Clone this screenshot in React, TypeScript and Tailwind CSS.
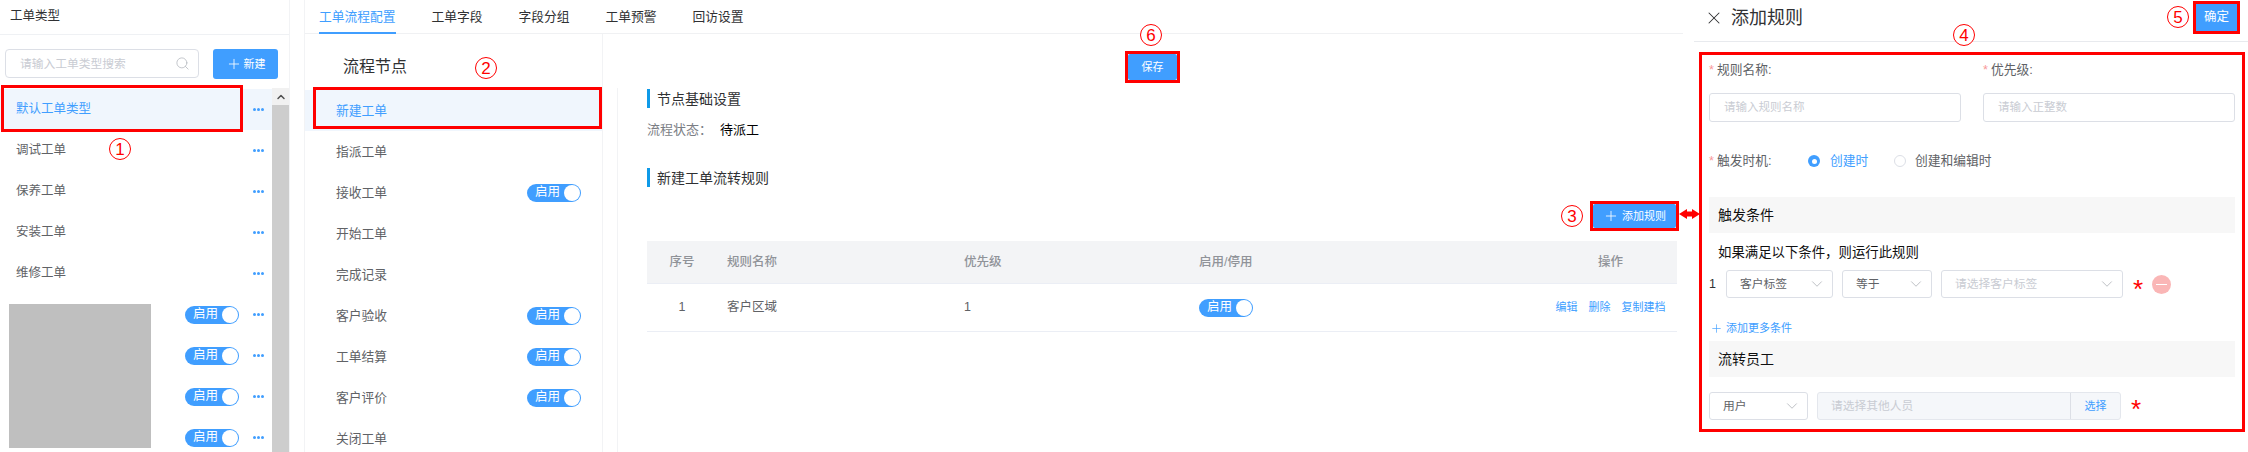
import { Search, Plus, X, ChevronDown, ChevronUp } from 'lucide-react'

const font = { fontFamily: '"Liberation Sans", "Noto Sans CJK SC", sans-serif' }

const circleCls =
  'absolute flex h-[22px] w-[22px] items-center justify-center rounded-full border border-[#ff0000] bg-white text-[17px] leading-none text-[#ff0000]'
const frameCls = 'absolute border-[3px] border-[#ff0000]'

const typeRows = [
  { name: '默认工单类型', active: true },
  { name: '调试工单' },
  { name: '保养工单' },
  { name: '安装工单' },
  { name: '维修工单' },
  { name: '', toggle: true },
  { name: '', toggle: true },
  { name: '', toggle: true },
  { name: '', toggle: true },
]

const nodeRows = [
  { name: '新建工单', active: true },
  { name: '指派工单' },
  { name: '接收工单', toggle: true },
  { name: '开始工单' },
  { name: '完成记录' },
  { name: '客户验收', toggle: true },
  { name: '工单结算', toggle: true },
  { name: '客户评价', toggle: true },
  { name: '关闭工单' },
]

function Toggle() {
  return (
    <div className="flex h-[18px] w-[54px] shrink-0 items-center justify-between rounded-full bg-[#409eff] pl-2 pr-px text-[12.5px] leading-none text-white">
      <span>启用</span>
      <span className="h-4 w-4 rounded-full bg-white" />
    </div>
  )
}

function Dots() {
  return (
    <div className="flex gap-px">
      <span className="h-[3px] w-[3px] rounded-full bg-[#409eff]" />
      <span className="h-[3px] w-[3px] rounded-full bg-[#409eff]" />
      <span className="h-[3px] w-[3px] rounded-full bg-[#409eff]" />
    </div>
  )
}

function SectionTitle({ children }: { children: string }) {
  return (
    <div className="flex h-[19px] items-center border-l-[3px] border-[#0f9ae8] pl-[7px] text-sm text-[#303133]">
      {children}
    </div>
  )
}

function Select({ value, placeholder, className }: { value?: string; placeholder?: string; className: string }) {
  return (
    <div className={`flex h-[28px] shrink-0 items-center justify-between rounded-[3px] border border-[#dcdfe6] pl-[13px] pr-[6px] text-[11.75px] ${className}`}>
      <span className={value ? 'text-[#606266]' : 'text-[#c9ccd3]'}>{value ?? placeholder}</span>
      <ChevronDown size={18} strokeWidth={1} className="text-[#a8abb2]" />
    </div>
  )
}

function App() {
  return (
    <div style={font} className="relative flex h-[452px] w-[2248px] overflow-hidden bg-white">
      {/* Order type list */}
      <aside className="flex w-[290px] shrink-0 flex-col border-r border-[#f2f3f5]">
        <div className="flex h-[35px] shrink-0 items-center border-b border-[#eff1f4] pb-px pl-[10px] text-[12.5px] text-[#303133]">
          工单类型
        </div>
        <div className="flex h-[53px] shrink-0 gap-[14px] pl-[5px] pt-[14px]">
          <div className="flex h-[29px] w-[194px] items-center justify-between rounded-[4px] border border-[#dcdfe6] pl-[14px] pr-[8px] text-[11.75px] text-[#c9ccd3]">
            <span>请输入工单类型搜索</span>
            <Search size={15} strokeWidth={1.25} className="text-[#b4b7be]" />
          </div>
          <button className="flex h-[30px] w-[65px] items-center justify-center gap-[2px] rounded-[3px] bg-[#409eff] text-[11px] text-white">
            <Plus size={16} strokeWidth={1.25} />
            新建
          </button>
        </div>
        <div className="relative flex min-h-0 flex-1">
          <div className="w-[272px] shrink-0 pt-px">
            {typeRows.map((r, i) => (
              <div
                key={i}
                className={`flex h-[41px] items-center pl-4 pr-2 text-[12.5px] ${r.active ? 'bg-[#f0f6fd] text-[#409eff]' : 'text-[#606266]'}`}
              >
                <span className="flex-1">{r.name}</span>
                {r.toggle && <Toggle />}
                <div className="ml-[14px]">
                  <Dots />
                </div>
              </div>
            ))}
          </div>
          {/* scrollbar */}
          <div className="flex flex-1 flex-col">
            <div className="flex h-[17px] items-center justify-center bg-[#f1f1f1]">
              <ChevronUp size={12} strokeWidth={3} className="text-[#505050]" />
            </div>
            <div className="flex-1 bg-[#cdcdcd]" />
          </div>
          <div className="absolute left-[9px] top-[216px] h-[144px] w-[142px] bg-[#bfbfbf]" />
        </div>
      </aside>

      {/* Config area */}
      <main className="ml-[14px] flex w-[1379px] shrink-0 flex-col border-l border-[#f2f3f5]">
        <nav className="flex h-[34px] shrink-0 gap-9 border-b border-[#f0f1f3] pl-[14px] text-[12.75px] text-[#303133]">
          <span className="h-[34px] border-b-2 border-[#409eff] pt-[7px] text-[#409eff]">工单流程配置</span>
          <span className="pt-[7px]">工单字段</span>
          <span className="pt-[7px]">字段分组</span>
          <span className="pt-[7px]">工单预警</span>
          <span className="pt-[7px]">回访设置</span>
        </nav>
        <div className="flex min-h-0 flex-1">
          <div className="flex w-[298px] shrink-0 flex-col border-r border-[#f2f3f5]">
            <div className="flex h-[56px] shrink-0 items-start pl-[38px] pt-[21px] text-base leading-[24px] text-[#303133]">
              流程节点
            </div>
            {nodeRows.map((r, i) => (
              <div
                key={i}
                className={`flex h-[41px] shrink-0 items-center justify-between pl-[31px] pr-[21px] text-[12.75px] ${r.active ? 'bg-[#f0f6fd] text-[#409eff]' : 'text-[#606266]'}`}
              >
                <span>{r.name}</span>
                {r.toggle && <Toggle />}
              </div>
            ))}
          </div>

          <div className="ml-[14px] flex w-[1066px] shrink-0 flex-col">
            <div className="flex h-[54px] shrink-0 items-start pl-[511px] pt-5">
              <button className="h-[26px] w-[49px] rounded-[2px] bg-[#409eff] text-[11px] text-white">保存</button>
            </div>
            <div className="flex flex-1 flex-col border-l border-[#f2f3f5] pl-[29px] pr-[6px] pt-px">
              <SectionTitle>节点基础设置</SectionTitle>
              <div className="mt-[12px] flex h-[20px] items-center text-[13px]">
                <span className="w-[73px] text-[#7b7e85]">流程状态：</span>
                <span className="text-[#000000]">待派工</span>
              </div>
              <div className="mt-[28px]">
                <SectionTitle>新建工单流转规则</SectionTitle>
              </div>
              <div className="mt-[17px] flex justify-end pr-px">
                <button className="flex h-[24px] w-[83px] items-center justify-center gap-[3px] rounded-[2px] bg-[#409eff] text-[11px] text-white">
                  <Plus size={16} strokeWidth={1.25} />
                  添加规则
                </button>
              </div>
              <div className="mt-[13px] grid h-[43px] grid-cols-[70px_247px_235px_353px_125px] items-center border-b border-[#ebeef5] bg-[#f3f4f6] text-[12.5px] font-medium text-[#909399]">
                <span className="text-center">序号</span>
                <span className="pl-[10px]">规则名称</span>
                <span>优先级</span>
                <span>启用/停用</span>
                <span className="pr-2 text-center">操作</span>
              </div>
              <div className="grid h-[48px] grid-cols-[70px_247px_235px_353px_125px] items-center border-b border-[#ebeef5] text-[12.5px] text-[#606266]">
                <span className="text-center">1</span>
                <span className="pl-[10px]">客户区域</span>
                <span>1</span>
                <Toggle />
                <div className="flex justify-center gap-[11px] pr-2 text-[11px] text-[#409eff]">
                  <span>编辑</span>
                  <span>删除</span>
                  <span>复制建档</span>
                </div>
              </div>
            </div>
          </div>
        </div>
      </main>

      {/* Add rule drawer */}
      <section className="flex min-w-0 flex-1 flex-col pl-[11px]">
        <header className="flex h-[42px] shrink-0 items-start justify-between border-b border-[#e8eaee] pl-[10px] pr-[11px]">
          <div className="flex items-center gap-[7px] pt-[4px] text-lg leading-[28px] text-[#303133]">
            <X size={20} strokeWidth={1.25} />
            添加规则
          </div>
          <button className="mt-1 h-[27px] w-[41px] bg-[#409eff] text-[12.5px] text-white">确定</button>
        </header>

        <div className="flex flex-col pr-[13px] pl-[15px]">
          <div className="mt-[17px] grid grid-cols-2 gap-x-[22px]">
            <div className="flex flex-col gap-[12px]">
              <label className="h-[22px] text-[12.75px] leading-[22px] text-[#606266]">
                <span className="mr-[3px] text-[#f89898]">*</span>规则名称:
              </label>
              <div className="flex h-[29px] items-center rounded-[3px] border border-[#dcdfe6] pl-[14px] text-[11.5px] text-[#c9ccd3]">
                请输入规则名称
              </div>
            </div>
            <div className="flex flex-col gap-[12px]">
              <label className="h-[22px] text-[12.75px] leading-[22px] text-[#606266]">
                <span className="mr-[3px] text-[#f89898]">*</span>优先级:
              </label>
              <div className="flex h-[29px] items-center rounded-[3px] border border-[#dcdfe6] pl-[14px] text-[11.5px] text-[#c9ccd3]">
                请输入正整数
              </div>
            </div>
          </div>

          <div className="mt-[28px] flex h-[22px] items-center text-[12.75px]">
            <label className="w-[99px] text-[#606266]">
              <span className="mr-[3px] text-[#f89898]">*</span>触发时机:
            </label>
            <span className="flex h-3 w-3 items-center justify-center rounded-full bg-[#409eff]">
              <span className="h-[5px] w-[5px] rounded-full bg-white" />
            </span>
            <span className="ml-[10px] w-[64px] text-[#409eff]">创建时</span>
            <span className="h-3 w-3 rounded-full border border-[#dcdfe6]" />
            <span className="ml-[9px] text-[#606266]">创建和编辑时</span>
          </div>

          <div className="mt-[25px] flex h-[36px] items-center bg-[#f7f7f7] pl-[9px] text-sm text-[#111111]">触发条件</div>
          <div className="mt-[9px] h-[22px] pl-[9px] text-[13.4px] leading-[22px] text-[#111111]">如果满足以下条件，则运行此规则</div>

          <div className="mt-[6px] flex items-center gap-[9px]">
            <span className="w-2 text-[12.5px] text-[#303133]">1</span>
            <Select value="客户标签" className="w-[107px]" />
            <Select value="等于" className="w-[90px]" />
            <Select placeholder="请选择客户标签" className="w-[182px]" />
            <span className="ml-[1px] h-[18px] text-[26px] leading-[28px] text-[#ff0000]">*</span>
            <span className="flex h-[19px] w-[19px] items-center justify-center rounded-full bg-[#fab6b6]">
              <span className="h-px w-[11px] bg-white" />
            </span>
          </div>

          <div className="mt-[21px] flex h-[18px] items-center gap-[3px] pl-[1px] text-[11px] text-[#409eff]">
            <Plus size={13} strokeWidth={1.25} />
            添加更多条件
          </div>

          <div className="mt-[4px] flex h-[36px] items-center bg-[#f7f7f7] pl-[9px] text-sm text-[#111111]">流转员工</div>

          <div className="mt-[15px] flex items-center">
            <Select value="用户" className="w-[99px]" />
            <div className="ml-[9px] flex h-[28px] w-[304px] rounded-[3px] border border-[#e4e7ed] bg-[#f5f7fa] text-[11.75px]">
              <span className="flex flex-1 items-center pl-[13px] text-[#c9ccd3]">请选择其他人员</span>
              <span className="flex w-[50px] items-center justify-center border-l border-[#dcdfe6] text-[11px] text-[#409eff]">选择</span>
            </div>
            <span className="ml-[10px] h-[18px] text-[26px] leading-[24px] text-[#ff0000]">*</span>
          </div>
        </div>
      </section>

      {/* Annotation frames */}
      <div className={`${frameCls} left-[1px] top-[85px] h-[47px] w-[242px]`} />
      <div className={`${frameCls} left-[313px] top-[87px] h-[42px] w-[289px]`} />
      <div className={`${frameCls} left-[1125px] top-[51px] h-[32px] w-[55px]`} />
      <div className={`${frameCls} left-[1590px] top-[201px] h-[30px] w-[89px]`} />
      <div className={`${frameCls} left-[1699px] top-[52px] h-[380px] w-[546px]`} />
      <div className={`${frameCls} left-[2193px] top-[1px] h-[33px] w-[47px]`} />

      {/* Annotation numbers */}
      <div className={`${circleCls} left-[109px] top-[138px]`}>1</div>
      <div className={`${circleCls} left-[475px] top-[57px]`}>2</div>
      <div className={`${circleCls} left-[1561px] top-[205px]`}>3</div>
      <div className={`${circleCls} left-[1953px] top-[24px]`}>4</div>
      <div className={`${circleCls} left-[2167px] top-[6px]`}>5</div>
      <div className={`${circleCls} left-[1140px] top-[24px]`}>6</div>

      <svg className="absolute left-[1679px] top-[208px]" width="21" height="12" viewBox="0 0 21 12">
        <path d="M0 6 L8 1 L8 3.5 L13 3.5 L13 1 L21 6 L13 11 L13 8.5 L8 8.5 L8 11 Z" fill="#ff0000" />
      </svg>
    </div>
  )
}

export default App
